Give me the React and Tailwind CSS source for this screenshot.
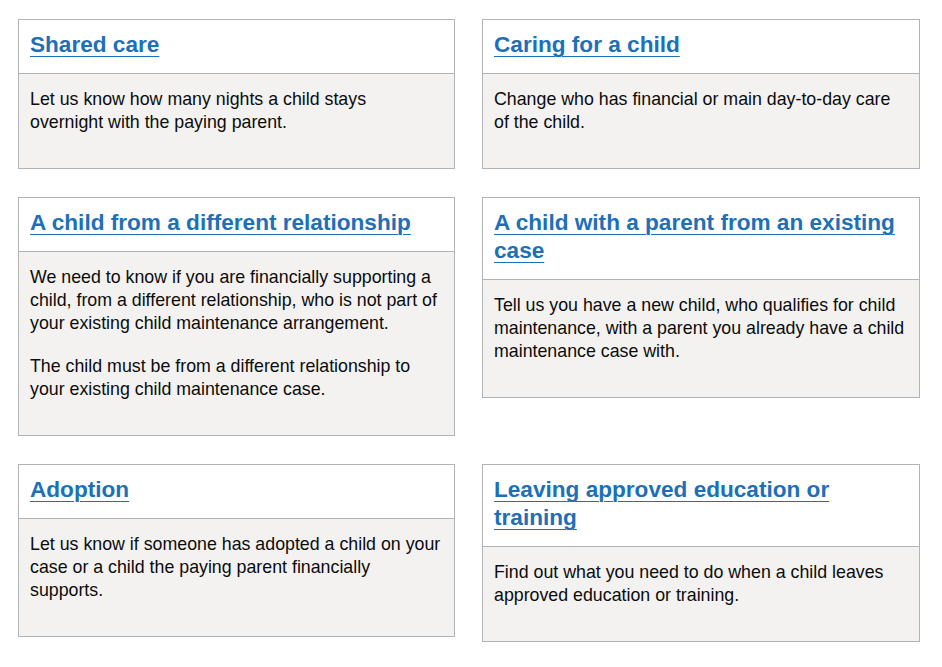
import React from "react";

const cards = [
  {
    title: "Shared care",
    body: ["Let us know how many nights a child stays overnight with the paying parent."],
  },
  {
    title: "Caring for a child",
    body: ["Change who has financial or main day-to-day care of the child."],
  },
  {
    title: "A child from a different relationship",
    body: [
      "We need to know if you are financially supporting a child, from a different relationship, who is not part of your existing child maintenance arrangement.",
      "The child must be from a different relationship to your existing child maintenance case.",
    ],
  },
  {
    title: "A child with a parent from an existing case",
    body: [
      "Tell us you have a new child, who qualifies for child maintenance, with a parent you already have a child maintenance case with.",
    ],
  },
  {
    title: "Adoption",
    body: [
      "Let us know if someone has adopted a child on your case or a child the paying parent financially supports.",
    ],
  },
  {
    title: "Leaving approved education or training",
    body: ["Find out what you need to do when a child leaves approved education or training."],
  },
];

function Card({ title, body }) {
  return (
    <div className="border border-[#b1b4b6]">
      <div className="bg-white px-[11px] pt-[11px] pb-[14px] border-b border-[#b1b4b6]">
        <a
          href="#"
          className="text-[22.6px] leading-[28px] font-bold text-[#1d70b8] underline decoration-1 underline-offset-[4px]"
        >
          {title}
        </a>
      </div>
      <div className="bg-[#f3f2f1] pl-[11px] pr-[12px] pt-[14px] pb-[14px]">
        {body.map((p, i) => (
          <p key={i} className="text-[17.8px] leading-[23px] text-[#0b0c0c] mb-[20px]">
            {p}
          </p>
        ))}
      </div>
    </div>
  );
}

export default function App() {
  return (
    <div
      className="bg-white min-h-screen pt-[19px] pl-[18px]"
      style={{ fontFamily: '"Liberation Sans", Arial, sans-serif' }}
    >
      <div className="grid grid-cols-[437px_438px] gap-x-[27px] gap-y-[28px] items-start">
        {cards.map((c) => (
          <Card key={c.title} {...c} />
        ))}
      </div>
    </div>
  );
}
